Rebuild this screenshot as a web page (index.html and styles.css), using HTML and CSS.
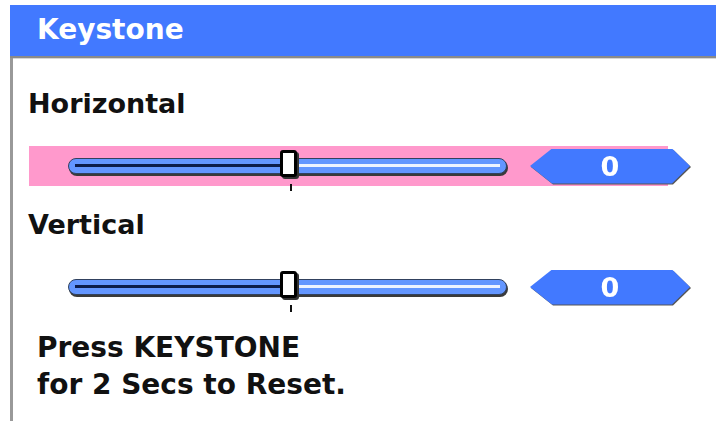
FILE: index.html
```html
<html>
    <head>
        <link rel="stylesheet" href="styles.css">
    </head>
    <body>
        <div class="panel">
            <div class="title">Keystone</div>
            <div class="content">
                <div class="label">Horizontal</div>
                <div class="row selected">
                    <div class="track">
                        <span class="fill-left"></span>
                        <span class="fill-right"></span>
                        <span class="knob"></span>
                        <span class="tick"></span>
                    </div>
                    <div class="value-wrap"><div class="value">0</div></div>
                </div>

                <div class="label">Vertical</div>
                <div class="row">
                    <div class="track">
                        <span class="fill-left"></span>
                        <span class="fill-right"></span>
                        <span class="knob"></span>
                        <span class="tick"></span>
                    </div>
                    <div class="value-wrap"><div class="value">0</div></div>
                </div>

                <div class="note">
                    Press KEYSTONE<br>
                    for 2 Secs to Reset.
                </div>
            </div>
        </div>
    </body>
</html>
```
FILE: styles.css
```css
html, body {
    margin: 0;
    height: 100%;
    overflow: hidden;
}
body {
    background: white;
    font-family: "DejaVu Sans", sans-serif;
    font-weight: bold;
}

.panel {
    margin: 5px 0 0 10px;
    width: 706px;
}

.title {
    height: 51px;
    line-height: 50px;
    background: #4279ff;
    color: white;
    font-size: 28px;
    padding-left: 27px;
    border-bottom: 2px solid #8a8a8a;
    box-shadow: 0 1px 0 #d6d6d6;
}

.content {
    border-left: 3px solid #999;
    padding-top: 28px;
    height: 340px;
}

.label {
    font-size: 27px;
    line-height: 35px;
    margin-left: 15px;
    margin-top: 21px;
    color: #111;
}
.label:first-child {
    margin-top: 0;
}

.row {
    display: flex;
    align-items: center;
    height: 40px;
    width: 639px;
    margin-left: 16px;
    margin-top: 25px;
}
.selected {
    background: #ff99cc;
    margin-top: 25px;
}

.track {
    position: relative;
    flex-shrink: 0;
    margin-left: 39px;
    width: 437px;
    height: 14px;
    border: 1px solid #31415e;
    border-radius: 8px;
    background: #6396ff;
    box-shadow: 1px 2px 0 #3a3a3a;
}
.fill-left, .fill-right {
    position: absolute;
    top: 5px;
    height: 3px;
}
.fill-left {
    left: 6px;
    width: 215px;
    background: #0c1c4a;
}
.fill-right {
    left: 221px;
    right: 6px;
    background: #eef3ff;
}
.knob {
    position: absolute;
    left: 211px;
    top: -9px;
    width: 11px;
    height: 21px;
    background: white;
    border: 3px solid black;
    border-radius: 3px;
    box-shadow: 2px 2px 0 #333;
}
.tick {
    position: absolute;
    left: 221px;
    top: 25px;
    width: 2px;
    height: 7px;
    background: #111;
}

.value-wrap {
    flex-shrink: 0;
    margin-left: 23px;
    filter: drop-shadow(1px 1px 0 #555);
}
.value {
    width: 160px;
    height: 35px;
    line-height: 35px;
    background: #4279ff;
    color: white;
    font-size: 27px;
    text-align: center;
    clip-path: polygon(0 50%, 22px 0, calc(100% - 18px) 0, 100% 50%, calc(100% - 18px) 100%, 22px 100%);
}

.note {
    font-size: 28px;
    line-height: 37px;
    margin-left: 24px;
    margin-top: 22px;
    color: #111;
}
```
